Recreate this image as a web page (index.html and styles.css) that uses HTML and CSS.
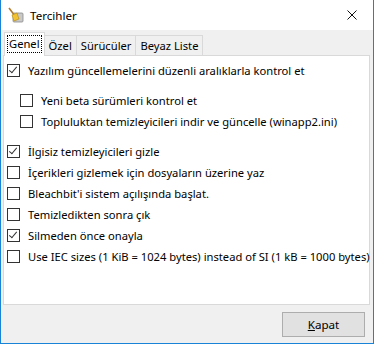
FILE: index.html
```html
<!DOCTYPE html>
<html lang="tr">
<head>
  <meta charset="UTF-8" />
  <title>Tercihler</title>
  <link rel="stylesheet" href="styles.css">
</head>
<body>
  <div class="window">
    <div class="titlebar">
      <svg class="app-icon" width="16" height="16" viewBox="0 0 16 16">
        <rect x="5" y="6" width="10" height="9" rx="1" fill="#c9c9c9" stroke="#8a8a8a" stroke-width="0.8"/>
        <path d="M1 1 L7 9" stroke="#b07a2a" stroke-width="1.6"/>
        <path d="M4 8 L9 6 L11 12 L6 14 Z" fill="#f2c230" stroke="#b68a10" stroke-width="0.6"/>
      </svg>
      <span class="title">Tercihler</span>
      <svg class="close" width="10" height="10" viewBox="0 0 10 10">
        <path d="M0.5 0.5 L9.5 9.5 M9.5 0.5 L0.5 9.5" stroke="#111" stroke-width="1"/>
      </svg>
    </div>

    <div class="content">
      <div class="tabs">
        <div class="tab active"><span class="focus">Genel</span></div>
        <div class="tab">Özel</div>
        <div class="tab">Sürücüler</div>
        <div class="tab">Beyaz Liste</div>
      </div>

      <div class="panel">
        <label class="option"><span class="box checked"></span>Yazılım güncellemelerini düzenli aralıklarla kontrol et</label>
        <div class="sub">
          <label class="option"><span class="box"></span>Yeni beta sürümleri kontrol et</label>
          <label class="option"><span class="box"></span>Topluluktan temizleyicileri indir ve güncelle (winapp2.ini)</label>
        </div>
        <div class="group">
          <label class="option"><span class="box checked"></span>İlgisiz temizleyicileri gizle</label>
          <label class="option"><span class="box"></span>İçerikleri gizlemek için dosyaların üzerine yaz</label>
          <label class="option"><span class="box"></span>Bleachbit'i sistem açılışında başlat.</label>
          <label class="option"><span class="box"></span>Temizledikten sonra çık</label>
          <label class="option"><span class="box checked"></span>Silmeden önce onayla</label>
          <label class="option"><span class="box"></span>Use IEC sizes (1 KiB = 1024 bytes) instead of SI (1 kB = 1000 bytes)</label>
        </div>
      </div>

      <div class="footer">
        <button class="btn"><u>K</u>apat</button>
      </div>
    </div>
  </div>
</body>
</html>
```

FILE: styles.css
```css
html, body {
  margin: 0;
  padding: 0;
  background: #fff;
}

body {
  font-family: "Noto Sans", "Segoe UI", sans-serif;
  font-size: 11.2px;
  color: #000;
}

.window {
  width: 372px;
  height: 343px;
  border: 1px solid #1883d7;
  border-top: none;
  display: flex;
  flex-direction: column;
}

.titlebar {
  height: 30px;
  background: #fff;
  display: flex;
  align-items: center;
  padding-left: 7px;
  padding-right: 16px;
  flex-shrink: 0;
}

.app-icon {
  margin-right: 6px;
  margin-top: -1px;
}

.title {
  flex: 1;
  font-size: 11.6px;
}

.close {
  margin-top: -1px;
}

.content {
  flex: 1;
  background: #f0f0f0;
  display: flex;
  flex-direction: column;
  padding: 2px 3px 0 2px;
}

.tabs {
  display: flex;
  align-items: flex-end;
  height: 23px;
  padding-left: 1px;
  position: relative;
  z-index: 1;
}

.tab {
  height: 20px;
  line-height: 19px;
  padding: 0 4px;
  border: 1px solid #d9d9d9;
  border-bottom: none;
  border-left: none;
  background: #f0f0f0;
  box-sizing: border-box;
}

.tab.active {
  background: #fff;
  border: 1px solid #d9d9d9;
  border-bottom: none;
  padding: 2px 2px 0 2px;
  margin-bottom: -1px;
  height: 24px;
}

.focus {
  display: block;
  border: 1px dotted #000;
  line-height: 16px;
  padding: 0 1px;
}

.panel {
  background: #fff;
  border: 1px solid #d9d9d9;
  height: 250px;
  box-sizing: border-box;
  padding: 4px 0 0 3px;
}

.option {
  display: flex;
  align-items: center;
  height: 21px;
  white-space: nowrap;
}

.box {
  width: 11px;
  height: 11px;
  border: 1px solid #333;
  background: #fff;
  margin-right: 8px;
  flex-shrink: 0;
  position: relative;
}

.box.checked::after {
  content: "";
  position: absolute;
  left: 3px;
  top: 0px;
  width: 3px;
  height: 7px;
  border-right: 1px solid #333;
  border-bottom: 1px solid #333;
  transform: rotate(40deg);
}

.sub {
  margin-top: 9px;
  padding-left: 13px;
}

.group {
  margin-top: 9px;
}

.footer {
  flex: 1;
  display: flex;
  justify-content: flex-end;
  align-items: flex-start;
  padding-top: 7px;
  padding-right: 5px;
}

.btn {
  width: 83px;
  height: 25px;
  font-family: inherit;
  font-size: 11.6px;
  background: #e1e1e1;
  border: 1px solid #adadad;
  color: #000;
  padding: 0;
}
```
